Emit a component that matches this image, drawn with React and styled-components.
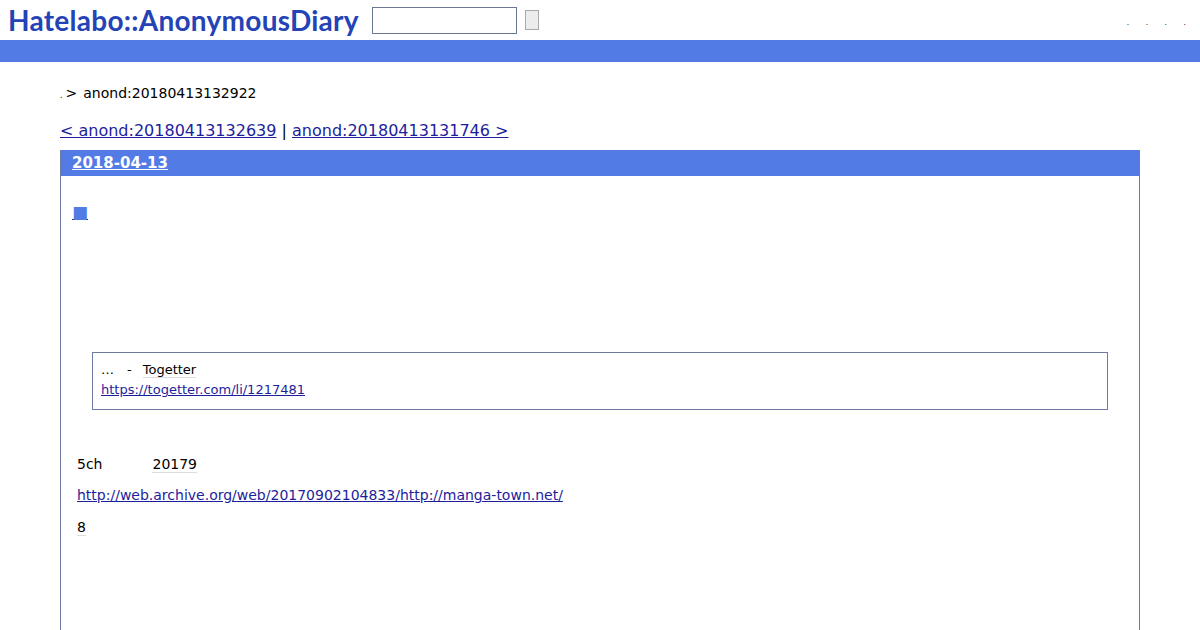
import React from "react";
import styled, { createGlobalStyle } from "styled-components";

const Global = createGlobalStyle`
  html, body { margin: 0; padding: 0; background: #fff; }
  body { font-family: "DejaVu Sans", sans-serif; color: #000; }
`;

const Header = styled.header`
  display: flex;
  align-items: center;
  height: 40px;
  padding: 0 8px;
  box-sizing: border-box;
`;

const Logo = styled.h1`
  margin: 0;
  font-family: "Lato", "DejaVu Sans", sans-serif;
  font-weight: 700;
  font-size: 28px;
  letter-spacing: 0.27px;
  color: #2443b6;
  line-height: 1;
`;

const SearchForm = styled.form`
  display: flex;
  align-items: center;
  margin-left: 13px;
  gap: 8px;
`;

const SearchInput = styled.input`
  width: 145px;
  height: 27px;
  box-sizing: border-box;
  border: 1px solid #6b7894;
  padding: 0;
`;

const SearchButton = styled.button`
  width: 14px;
  height: 20px;
  box-sizing: border-box;
  border: 1px solid #a9a9a9;
  background: #ececec;
  padding: 0;
`;

const Menu = styled.nav`
  margin-left: auto;
  display: flex;
  gap: 16px;
  padding-right: 6px;
  font-size: 9px;
  color: #444;
  align-self: flex-start;
  padding-top: 17px;
`;

const Bar = styled.div`
  height: 22px;
  background: #537be6;
`;

const Main = styled.main`
  padding: 0 60px;
`;

const Breadcrumb = styled.div`
  margin-top: 22px;
  font-size: 14px;
  line-height: 18px;
  display: flex;
  align-items: baseline;
`;

const Dot = styled.span`
  font-size: 8px;
  margin-right: 3px;
`;

const Sep = styled.span`
  margin-right: 6px;
`;

const Pager = styled.div`
  margin-top: 16px;
  font-size: 16px;
  line-height: 20px;
`;

const NavLink = styled.a`
  color: #1d1e9c;
  text-decoration: underline;
`;

const Section = styled.section`
  margin-top: 9px;
  border: 1px solid #6c7aa0;
  border-top: none;
  height: 600px;
`;

const DayTitle = styled.h2`
  margin: 0;
  height: 26px;
  background: #537be6;
  padding-left: 11px;
  font-size: 15px;
  line-height: 26px;
  font-weight: 700;
  color: #fff;
  a { color: #fff; text-decoration: underline; }
`;

const Body = styled.div`
  padding: 0 31px 0 11px;
`;

const Anchor = styled.a`
  display: inline-block;
  margin-top: 28px;
  color: #537be6;
  font-size: 17px;
  line-height: 17px;
  text-decoration: underline;
  text-decoration-color: #2a2a70;
`;

const Blank = styled.div`
  height: ${(p) => p.$h}px;
`;

const Quote = styled.blockquote`
  margin: 0 0 0 20px;
  border: 1px solid #6c7aa0;
  padding: 7px 8px 9px 8px;
  font-size: 13px;
  line-height: 20px;
`;

const Keyword = styled.span`
  border-bottom: 1px solid #dcdcdc;
  margin-left: ${(p) => p.$ml || 0}px;
`;

const Gap = styled.span`
  display: inline-block;
  width: ${(p) => p.$w}px;
`;

const QLink = styled.a`
  color: #1d1e9c;
  text-decoration: underline;
`;

const Para = styled.p`
  margin: 0;
  padding-left: 5px;
  font-size: 14px;
  line-height: 20px;
  margin-top: ${(p) => p.$mt || 0}px;
`;

export default function App() {
  return (
    <>
      <Global />
      <Header>
        <Logo>Hatelabo::AnonymousDiary</Logo>
        <SearchForm onSubmit={(e) => e.preventDefault()}>
          <SearchInput type="text" />
          <SearchButton type="submit" />
        </SearchForm>
        <Menu>
          <span>.</span>
          <span>.</span>
          <span>.</span>
          <span>.</span>
        </Menu>
      </Header>
      <Bar />
      <Main>
        <Breadcrumb>
          <Dot>.</Dot>
          <Sep>&gt;</Sep>
          <span>anond:20180413132922</span>
        </Breadcrumb>
        <Pager>
          <NavLink href="#">&lt; anond:20180413132639</NavLink> |{" "}
          <NavLink href="#">anond:20180413131746 &gt;</NavLink>
        </Pager>
        <Section>
          <DayTitle>
            <a href="#">2018-04-13</a>
          </DayTitle>
          <Body>
            <Anchor href="#">■</Anchor>
            <Blank $h={130} />
            <Quote>
              <div>
                …<Gap $w={13} />-<Gap $w={11} />
                <Keyword>Togetter</Keyword>
              </div>
              <div>
                <QLink href="#">https://togetter.com/li/1217481</QLink>
              </div>
            </Quote>
            <Para $mt={44}>
              5ch<Keyword $ml={50}>20179</Keyword>
            </Para>
            <Para $mt={11}>
              <QLink href="#">
                http://web.archive.org/web/20170902104833/http://manga-town.net/
              </QLink>
            </Para>
            <Para $mt={12}>
              <Keyword>8</Keyword>
            </Para>
          </Body>
        </Section>
      </Main>
    </>
  );
}
